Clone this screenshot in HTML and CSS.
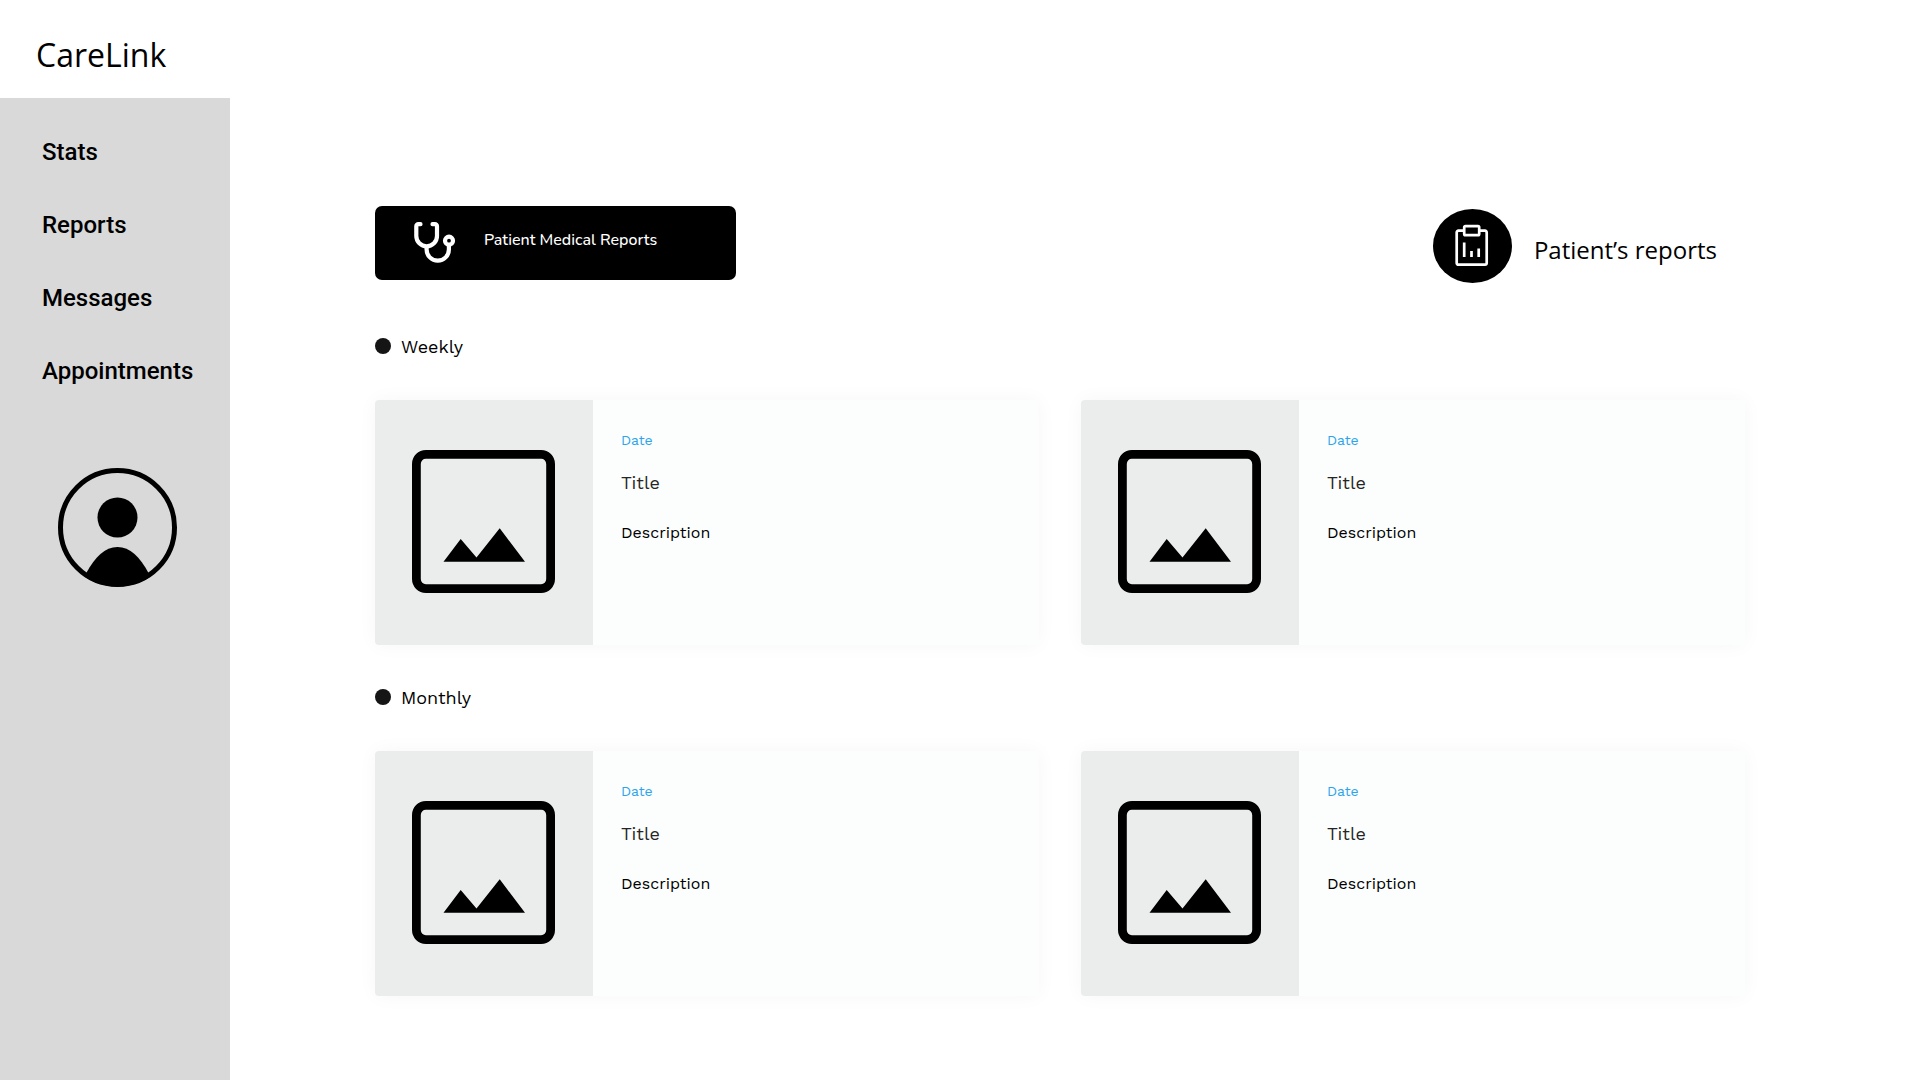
FILE: index.html
```html
<!DOCTYPE html>
<html lang="en">
<head>
<meta charset="utf-8">
<meta name="viewport" content="width=device-width, initial-scale=1">
<title>CareLink</title>
<link rel="stylesheet" href="styles.css">
</head>
<body>
<svg class="sprite" aria-hidden="true">
  <symbol id="picture" viewBox="0 0 143 143">
    <rect x="4.4" y="4.4" width="134.2" height="134.2" rx="9.5" fill="none" stroke="currentColor" stroke-width="8.8"/>
    <path d="M31.5 111.8 48.7 89l15.8 18.5 23.2-29.2 25.3 33.5z" fill="currentColor"/>
  </symbol>
</svg>
<header class="topbar"><a class="brand" href="#">CareLink</a></header>
<div class="layout">
  <aside class="sidebar">
    <nav class="nav" aria-label="Main">
      <a href="#">Stats</a>
      <a href="#">Reports</a>
      <a href="#">Messages</a>
      <a href="#">Appointments</a>
    </nav>
    <a class="profile" href="#" aria-label="Profile">
      <svg class="avatar" viewBox="0 0 119 119" aria-hidden="true">
        <clipPath id="disc"><circle cx="59.5" cy="59.5" r="59"/></clipPath>
        <circle cx="59.5" cy="59.5" r="57" fill="none" stroke="currentColor" stroke-width="5"/>
        <circle cx="59.5" cy="49.5" r="20" fill="currentColor"/>
        <path clip-path="url(#disc)" d="M22 119 28.3 105C37 89 47 79 59.5 79s22.500 10 31 26L97 119z" fill="currentColor"/>
      </svg>
    </a>
  </aside>
  <main class="content">
    <div class="toolbar">
      <button class="reports-button" type="button">
        <svg class="stethoscope" viewBox="0 0 42 42" fill="none" stroke="currentColor" stroke-width="4.200" stroke-linecap="round" aria-hidden="true">
          <path d="M6.500 2.200H4.300a2 2 0 0 0-2 2V14a10.350 10.350 0 0 0 20.700 0V4.200a2 2 0 0 0-2-2H18.500"/>
          <path d="M12.600 25v2.500a11.150 11.150 0 0 0 22.300 0V23"/>
          <circle cx="35" cy="18.700" r="4"/>
        </svg>
        <span class="reports-label">Patient Medical Reports</span>
      </button>
      <div class="page-title">
        <span class="badge">
          <svg class="clipboard" viewBox="0 0 36 44" fill="none" stroke="currentColor" stroke-width="2.700" aria-hidden="true">
            <path d="M10 6.700H4.400a1.700 1.700 0 0 0-1.700 1.700V39a1.700 1.700 0 0 0 1.700 1.700h26.600a1.700 1.700 0 0 0 1.700-1.700V8.400a1.700 1.700 0 0 0-1.700-1.700H25.200"/>
            <rect x="10.200" y="2.200" width="15" height="9" rx="1.200"/>
            <path d="M10.200 18.500V33M17.500 27v6M24.700 24.500V33"/>
          </svg>
        </span>
        <h1>Patient’s reports</h1>
      </div>
    </div>
    <section class="period">
      <h2>Weekly</h2>
      <div class="cards">
        <article class="card">
          <div class="thumb"><svg class="picture" aria-hidden="true"><use href="#picture"/></svg></div>
          <div class="details"><p class="date">Date</p><h3>Title</h3><p class="description">Description</p></div>
        </article>
        <article class="card">
          <div class="thumb"><svg class="picture" aria-hidden="true"><use href="#picture"/></svg></div>
          <div class="details"><p class="date">Date</p><h3>Title</h3><p class="description">Description</p></div>
        </article>
      </div>
    </section>
    <section class="period">
      <h2>Monthly</h2>
      <div class="cards">
        <article class="card">
          <div class="thumb"><svg class="picture" aria-hidden="true"><use href="#picture"/></svg></div>
          <div class="details"><p class="date">Date</p><h3>Title</h3><p class="description">Description</p></div>
        </article>
        <article class="card">
          <div class="thumb"><svg class="picture" aria-hidden="true"><use href="#picture"/></svg></div>
          <div class="details"><p class="date">Date</p><h3>Title</h3><p class="description">Description</p></div>
        </article>
      </div>
    </section>
  </main>
</div>
</body>
</html>
```
FILE: styles.css
```css
* {
  box-sizing: border-box;
}

body {
  margin: 0;
  min-height: 100vh;
  display: flex;
  flex-direction: column;
  background: #fff;
  color: #000;
  font-family: "Work Sans", Inter, sans-serif;
}

h1, h2, h3, p {
  margin: 0;
  font-weight: 400;
}

a {
  color: inherit;
  text-decoration: none;
}

svg {
  display: block;
  flex: none;
}

.sprite {
  position: absolute;
  width: 0;
  height: 0;
}

.topbar {
  display: flex;
  padding: 33px 36px 21px;
}

.brand {
  font: 400 32px/44px "Open Sans", sans-serif;
}

.layout {
  flex: 1;
  display: flex;
}

.sidebar {
  flex: none;
  width: 230px;
  padding: 40px 0 40px 42px;
  background: #d9d9d9;
}

.nav {
  display: flex;
  flex-direction: column;
  gap: 45px;
  font: 500 24px/28px Roboto, sans-serif;
}

.profile {
  display: block;
  margin: 83px 0 0 16px;
}

.avatar {
  width: 119px;
  height: 119px;
}

.content {
  flex: 1;
  min-width: 0;
  padding: 108px 175px 40px 145px;
}

.toolbar {
  display: flex;
  justify-content: space-between;
  align-items: flex-start;
  margin-bottom: 51px;
}

.reports-button {
  display: flex;
  align-items: center;
  gap: 28px;
  width: 361px;
  height: 74px;
  padding: 0 0 0 39px;
  border: 0;
  border-radius: 7px;
  background: #000;
  color: #fff;
  font: 500 16px/24px Nunito, "Open Sans", sans-serif;
}

.stethoscope {
  width: 42px;
  height: 42px;
}

.reports-label {
  padding-bottom: 6px;
}

.page-title {
  display: flex;
  align-items: center;
  gap: 22px;
  padding: 3px 28px 0 0;
}

.page-title h1 {
  padding-top: 8px;
  font: 400 24px/32px "Open Sans", sans-serif;
}

.badge {
  display: grid;
  place-items: center;
  width: 79px;
  height: 74px;
  border-radius: 50%;
  background: #000;
  color: #fff;
}

.clipboard {
  width: 36px;
  height: 44px;
}

.period + .period {
  margin-top: 40px;
}

.period h2 {
  display: flex;
  align-items: center;
  gap: 10px;
  margin-bottom: 40px;
  font-size: 18px;
  line-height: 26px;
  color: #000;
}

.period h2::before {
  content: "";
  width: 16px;
  height: 16px;
  margin-bottom: 2px;
  border-radius: 50%;
  background: #151515;
}

.cards {
  display: grid;
  grid-template-columns: 1fr 1fr;
  gap: 42px;
}

.card {
  display: flex;
  min-height: 245px;
  overflow: hidden;
  border-radius: 4px;
  background: #fcfefd;
  box-shadow: 0 0 20px rgba(0, 0, 0, 0.04);
}

.thumb {
  flex: none;
  width: 218px;
  padding: 50px 37px;
  background: #ebedec;
}

.picture {
  width: 143px;
  height: 143px;
}

.details {
  padding: 30px 28px;
}

.date {
  font-size: 14px;
  line-height: 20px;
  color: #2ba4ec;
}

.details h3 {
  margin-top: 21px;
  font-size: 18px;
  line-height: 24px;
  color: #252525;
}

.description {
  margin-top: 26px;
  font-size: 16px;
  line-height: 24px;
}
```
